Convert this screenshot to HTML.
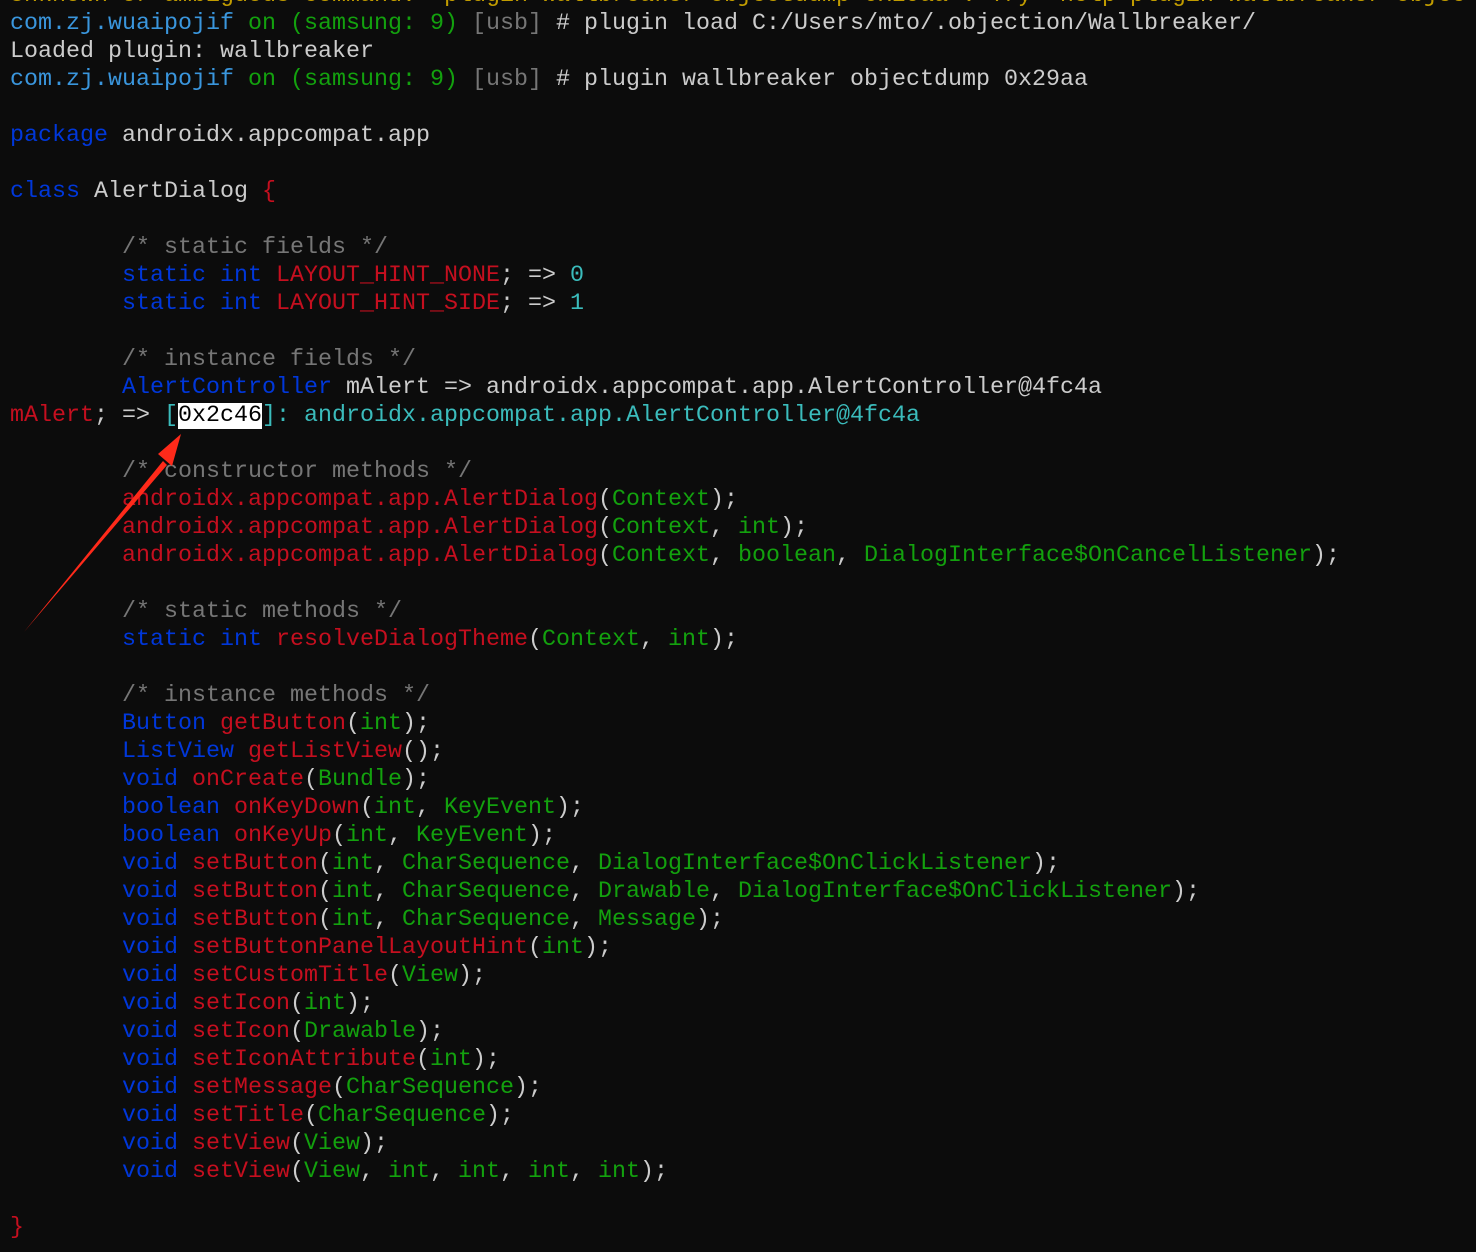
<!DOCTYPE html>
<html><head><meta charset="utf-8"><style>
html,body{margin:0;padding:0;background:#0c0c0c;width:1476px;height:1252px;overflow:hidden}
pre{position:absolute;left:10px;top:-18px;margin:0;font-family:"Liberation Mono",monospace;font-size:23.33px;line-height:28px;color:#cccccc;white-space:pre}
.b{color:#3a96dd}.g{color:#13a10e}.y{color:#c19c00}.gr{color:#767676}.k{color:#0037da}.r{color:#c50f1f}.c{color:#3bbcbc}.m{color:#767676}
.hl{background:#fff;color:#000}
svg{position:absolute;left:0;top:0}
</style></head><body>
<pre><span class="y">Unknown or ambiguous command: 'plugin wallbreaker objectdump 0x29aa'. Try 'help plugin wallbreaker objec</span>
<span class="b">com.zj.wuaipojif</span> <span class="g">on (samsung: 9)</span> <span class="gr">[usb]</span> # plugin load C:/Users/mto/.objection/Wallbreaker/
Loaded plugin: wallbreaker
<span class="b">com.zj.wuaipojif</span> <span class="g">on (samsung: 9)</span> <span class="gr">[usb]</span> # plugin wallbreaker objectdump 0x29aa

<span class="k">package</span> androidx.appcompat.app

<span class="k">class</span> AlertDialog <span class="r">{</span>

        <span class="m">/* static fields */</span>
        <span class="k">static int</span> <span class="r">LAYOUT_HINT_NONE</span>; =&gt; <span class="c">0</span>
        <span class="k">static int</span> <span class="r">LAYOUT_HINT_SIDE</span>; =&gt; <span class="c">1</span>

        <span class="m">/* instance fields */</span>
        <span class="k">AlertController</span> mAlert =&gt; androidx.appcompat.app.AlertController@4fc4a
<span class="r">mAlert</span>; =&gt; <span class="c">[</span><span class="hl">0x2c46</span><span class="c">]: androidx.appcompat.app.AlertController@4fc4a</span>

        <span class="m">/* constructor methods */</span>
        <span class="r">androidx.appcompat.app.AlertDialog</span>(<span class="g">Context</span>);
        <span class="r">androidx.appcompat.app.AlertDialog</span>(<span class="g">Context</span>, <span class="g">int</span>);
        <span class="r">androidx.appcompat.app.AlertDialog</span>(<span class="g">Context</span>, <span class="g">boolean</span>, <span class="g">DialogInterface$OnCancelListener</span>);

        <span class="m">/* static methods */</span>
        <span class="k">static int</span> <span class="r">resolveDialogTheme</span>(<span class="g">Context</span>, <span class="g">int</span>);

        <span class="m">/* instance methods */</span>
        <span class="k">Button</span> <span class="r">getButton</span>(<span class="g">int</span>);
        <span class="k">ListView</span> <span class="r">getListView</span>();
        <span class="k">void</span> <span class="r">onCreate</span>(<span class="g">Bundle</span>);
        <span class="k">boolean</span> <span class="r">onKeyDown</span>(<span class="g">int</span>, <span class="g">KeyEvent</span>);
        <span class="k">boolean</span> <span class="r">onKeyUp</span>(<span class="g">int</span>, <span class="g">KeyEvent</span>);
        <span class="k">void</span> <span class="r">setButton</span>(<span class="g">int</span>, <span class="g">CharSequence</span>, <span class="g">DialogInterface$OnClickListener</span>);
        <span class="k">void</span> <span class="r">setButton</span>(<span class="g">int</span>, <span class="g">CharSequence</span>, <span class="g">Drawable</span>, <span class="g">DialogInterface$OnClickListener</span>);
        <span class="k">void</span> <span class="r">setButton</span>(<span class="g">int</span>, <span class="g">CharSequence</span>, <span class="g">Message</span>);
        <span class="k">void</span> <span class="r">setButtonPanelLayoutHint</span>(<span class="g">int</span>);
        <span class="k">void</span> <span class="r">setCustomTitle</span>(<span class="g">View</span>);
        <span class="k">void</span> <span class="r">setIcon</span>(<span class="g">int</span>);
        <span class="k">void</span> <span class="r">setIcon</span>(<span class="g">Drawable</span>);
        <span class="k">void</span> <span class="r">setIconAttribute</span>(<span class="g">int</span>);
        <span class="k">void</span> <span class="r">setMessage</span>(<span class="g">CharSequence</span>);
        <span class="k">void</span> <span class="r">setTitle</span>(<span class="g">CharSequence</span>);
        <span class="k">void</span> <span class="r">setView</span>(<span class="g">View</span>);
        <span class="k">void</span> <span class="r">setView</span>(<span class="g">View</span>, <span class="g">int</span>, <span class="g">int</span>, <span class="g">int</span>, <span class="g">int</span>);

<span class="r">}</span></pre>
<svg width="1476" height="1252" viewBox="0 0 1476 1252">
<polygon points="24,632 163,461 167,465" fill="#ff2a1a"/>
<polygon points="181,434 158,454 172,466" fill="#ff2a1a"/>
</svg>
</body></html>
